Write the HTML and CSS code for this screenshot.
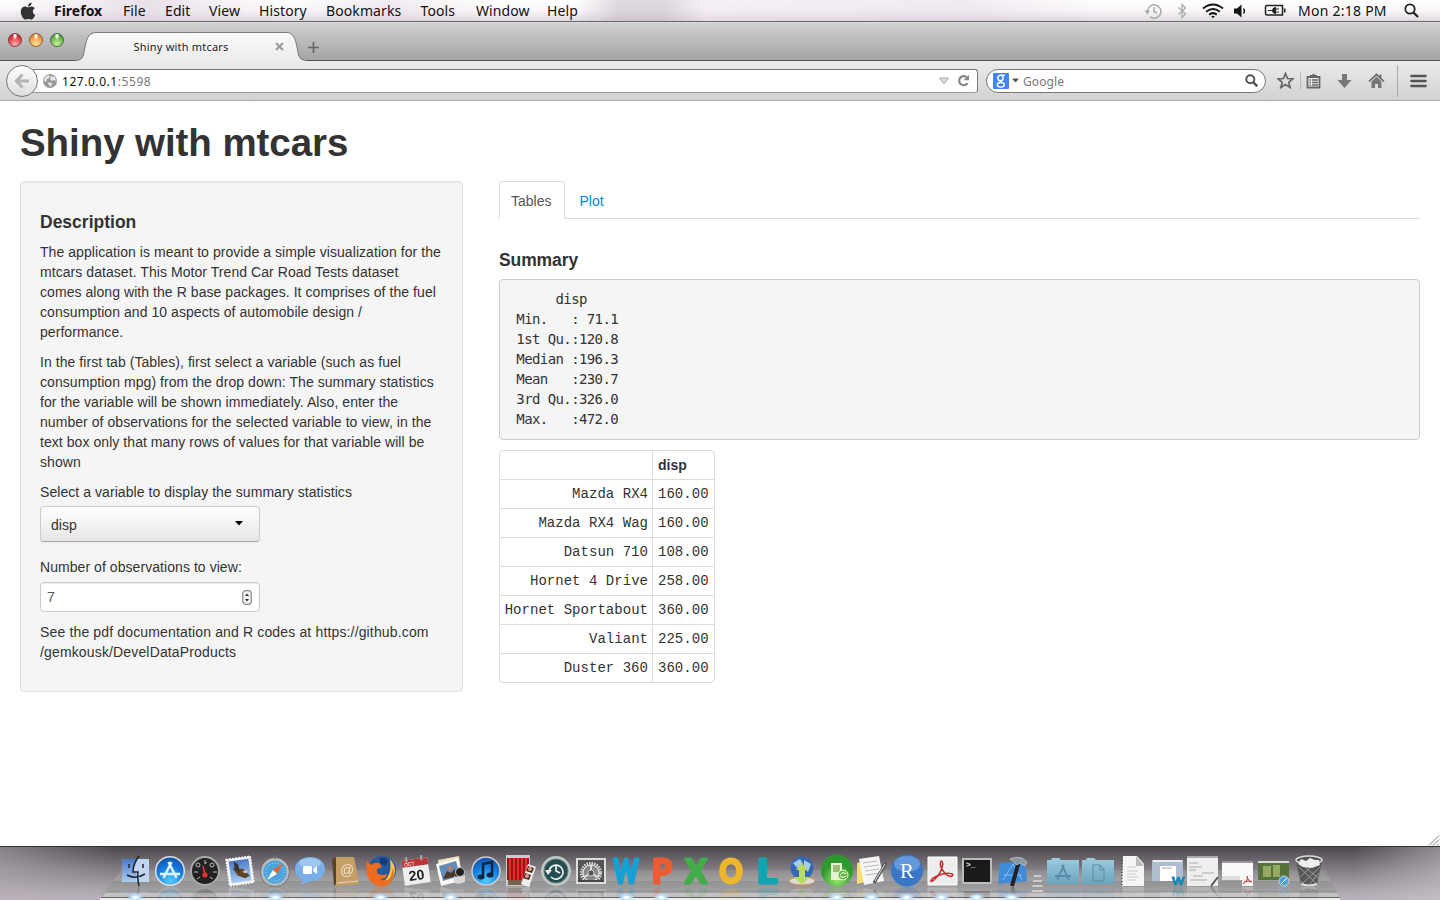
FILE: index.html
```html
<!DOCTYPE html>
<html lang="en">
<head>
<meta charset="utf-8">
<title>Shiny with mtcars</title>
<link rel="stylesheet" href="styles.css">
</head>
<body>
<header class="menubar">
  <svg class="apple" viewBox="0 20 384 470" width="16" height="18"><path fill="#333" d="M318.7 268.7c-.2-36.7 16.4-64.4 50-84.8-18.8-26.9-47.2-41.7-84.7-44.6-35.5-2.8-74.3 20.7-88.5 20.7-15 0-49.4-19.7-76.4-19.7C63.3 141.2 4 184.8 4 273.5q0 39.3 14.4 81.2c12.8 36.7 59 126.7 107.2 125.2 25.2-.6 43-17.9 75.8-17.9 31.8 0 48.3 17.9 76.4 17.9 48.6-.7 90.4-82.5 102.6-119.3-65.2-30.7-61.7-90-61.7-91.9zm-56.6-164.2c27.3-32.4 24.8-61.9 24-72.5-24.1 1.4-52 16.4-67.9 34.9-17.5 19.8-27.8 44.3-25.6 71.9 26.1 2 49.9-11.4 69.5-34.3z"/></svg>
  <nav class="menus"><b>Firefox</b><span>File</span><span>Edit</span><span>View</span><span>History</span><span>Bookmarks</span><span>Tools</span><span>Window</span><span>Help</span></nav>
  <div class="status">
    <svg width="18" height="18" viewBox="0 0 18 18" fill="none" stroke="#aaa" stroke-width="1.5"><path d="M3.500 10A6.700 6.700 0 1 1 6 14.800M10 5v4.500l3 1.500"/><path d="M.3 8.500h6l-3 4z" fill="#aaa" stroke="none"/></svg>
    <svg width="10" height="16" viewBox="0 0 10 16" fill="none" stroke="#aaa" stroke-width="1.2"><path d="M1.500 4.500l7 6.500L5 14.500v-13L8.500 5l-7 6.500"/></svg>
    <svg width="22" height="16" viewBox="0 0 22 16" fill="none" stroke="#151515" stroke-width="2"><path d="M1 5.500Q11-2.500 21 5.500M4.200 8.700Q11 3.300 17.800 8.700M7.200 11.600Q11 8.700 14.800 11.600"/><path d="M9.200 13.300Q11 12 12.800 13.300L11 15.200z" fill="#151515" stroke="none"/></svg>
    <svg width="14" height="14" viewBox="0 0 14 14"><path fill="#151515" d="M1 4.500h3l4.500-4v13l-4.500-4H1z"/><path d="M10.500 4.500q2 2.500 0 5" fill="none" stroke="#151515" stroke-width="1.300"/></svg>
    <svg width="22" height="13" viewBox="0 0 22 13" fill="none" stroke="#222" stroke-width="1.500"><path d="M17 1.500h1.500v9.500H17M5 1.500h12M5 11h12M5 1.500H3Q1.500 1.500 1.500 3v6.500Q1.500 11 3 11h2"/><path d="M20.700 4.500v4" stroke-width="1.600"/><path fill="#222" stroke="none" d="M4 6h4q1-3 4-3v1.500h3v1h-3v2h3v1h-3V10q-3 0-4-3H4z"/></svg>
    <span class="clock">Mon 2:18 PM</span>
    <svg width="15" height="15" viewBox="0 0 15 15" fill="none" stroke="#222"><circle cx="6" cy="6" r="4.700" stroke-width="1.800"/><path d="M9.500 9.500l4.500 4.500" stroke-width="2.300"/></svg>
  </div>
</header>
<section class="browser">
  <div class="tabbar">
    <div class="lights"><i class="red"></i><i class="amber"></i><i class="green"></i></div>
    <div class="tab">
      <svg class="tab-shape" width="232" height="29" viewBox="0 0 232 29"><defs><linearGradient id="tabg" x2="0" y2="1"><stop stop-color="#fbfbfb"/><stop offset="1" stop-color="#ebebeb"/></linearGradient></defs><path d="M0 28.500C9 28 8 24 10 15C12 5 14 .500 22 .500H211C218 .500 220 5 222 15C224 24 223 28 232 28.500V29H0z" fill="url(#tabg)"/><path d="M0 28.500C9 28 8 24 10 15C12 5 14 .500 22 .500H211C218 .500 220 5 222 15C224 24 223 28 232 28.500" fill="none" stroke="#777"/></svg>
      <span class="tab-title">Shiny with mtcars</span>
      <svg class="tab-close" width="9" height="9" viewBox="0 0 9 9"><path d="M1 1l7 7M8 1l-7 7" stroke="#999" stroke-width="2"/></svg>
    </div>
    <svg class="plus" width="11" height="11" viewBox="0 0 11 11"><path d="M5.500 0v11M0 5.500h11" stroke="#666" stroke-width="1.600"/></svg>
  </div>
  <div class="toolbar">
    <div class="back"><svg width="16" height="16" viewBox="0 0 16 16"><path d="M8.500 1.500L2.500 8l6 6.500M3 8h12" fill="none" stroke="#b4b4b4" stroke-width="3.200"/></svg></div>
    <div class="address">
      <svg width="14" height="14" viewBox="0 0 14 14"><circle cx="7" cy="7" r="7" fill="#999"/><path d="M2 3l3-2 2 1-1 2-2 1-1 3-2-1zM8 2l4 1 1 4-2-1-2 1-2-2zM6 8l3 1-1 4-3-3z" fill="#e6e6e6"/></svg>
      <span class="url">127.0.0.1<em>:5598</em></span>
      <svg class="drop" width="10" height="8" viewBox="0 0 10 8"><path d="M.5 1h9L5 7z" fill="#ddd" stroke="#aaa"/></svg>
      <svg width="13" height="13" viewBox="0 0 13 13"><path d="M9.500 3.200A4.500 4.500 0 1 0 10.500 9" fill="none" stroke="#888" stroke-width="2.200"/><path d="M12 .800v5.500H6.500z" fill="#888"/></svg>
    </div>
    <div class="search">
      <svg width="16" height="16" viewBox="0 0 16 16"><rect width="16" height="16" rx="1" fill="#4285f4"/><g fill="none" stroke="#fff" stroke-width="1.400"><ellipse cx="7.500" cy="5" rx="2.600" ry="2.800"/><path d="M8 2.200h4M8.500 7.500Q6.500 8.500 8.300 9.300"/><ellipse cx="7.800" cy="11.800" rx="3.500" ry="2.300"/></g></svg>
      <svg width="7" height="5" viewBox="0 0 7 5"><path d="M0 .500h7L3.500 4.500z" fill="#555"/></svg>
      <span>Google</span>
      <svg class="magnifier" width="13" height="13" viewBox="0 0 13 13" fill="none" stroke="#555" stroke-width="2"><circle cx="5.300" cy="5.300" r="4"/><path d="M8.300 8.300l4 4" stroke-width="2.600"/></svg>
    </div>
    <div class="tools">
      <svg width="17" height="17" viewBox="0 0 17 17"><path d="M8.500 1.500l2 5 5.300.3-4 3.500 1.300 5.200-4.600-2.900-4.600 2.900 1.300-5.200-4-3.500 5.300-.3z" fill="none" stroke="#666" stroke-width="1.700"/></svg>
      <i class="rule"></i>
      <svg width="15" height="16" viewBox="0 0 15 16"><path d="M1.500 4h12v10.500h-12z" fill="#eee" stroke="#666" stroke-width="1.800"/><path d="M4 4V2h2L7.500.500 9 2h2v2z" fill="#666"/><path d="M3.500 7h1.500M6 7h6M3.500 9.500H5M6 9.500h6M3.500 12H5M6 12h6" stroke="#666" stroke-width="1.300"/></svg>
      <svg width="15" height="16" viewBox="0 0 15 16"><path d="M5 1h5v6h4.500l-7 8-7-8H5z" fill="#777"/></svg>
      <svg width="17" height="16" viewBox="0 0 17 16"><path d="M1 8.500l7.500-7 7.500 7M12.500 1.500v4" fill="none" stroke="#666" stroke-width="1.700"/><path d="M3.500 8.500l5-5 5 5V15H10v-4H7v4H3.500z" fill="#777"/></svg>
      <i class="rule tall"></i>
      <svg width="17" height="14" viewBox="0 0 17 14"><path d="M1.500 2h14M1.500 7h14M1.500 12h14" stroke="#555" stroke-width="2.600" stroke-linecap="round"/></svg>
    </div>
  </div>
</section>
<main class="page">
  <h1>Shiny with mtcars</h1>
  <div class="columns">
    <aside class="well">
      <h4>Description</h4>
      <p>The application is meant to provide a simple visualization for the<br>mtcars dataset. This Motor Trend Car Road Tests dataset<br>comes along with the R base packages. It comprises of the fuel<br>consumption and 10 aspects of automobile design /<br>performance.</p>
      <p>In the first tab (Tables), first select a variable (such as fuel<br>consumption mpg) from the drop down: The summary statistics<br>for the variable will be shown immediately. Also, enter the<br>number of observations for the selected variable to view, in the<br>text box only that many rows of values for that variable will be<br>shown</p>
      <div class="label">Select a variable to display the summary statistics</div>
      <div class="select"><span>disp</span><svg width="8" height="5" viewBox="0 0 8 5"><path d="M0 0h8L4 4.500z"/></svg></div>
      <div class="label">Number of observations to view:</div>
      <div class="number"><span>7</span><svg width="10" height="15" viewBox="0 0 10 15"><rect x=".7" y=".7" width="8.600" height="13.600" rx="3" fill="#f3f3f3" stroke="#888" stroke-width="1.200"/><path d="M3 6l2-2.500L7 6zM3 9l2 2.500L7 9z" fill="#333"/></svg></div>
      <p class="note">See the pdf documentation and R codes at https://github.com<br>/gemkousk/DevelDataProducts</p>
    </aside>
    <section class="content">
      <nav class="tabs"><span class="active">Tables</span><span>Plot</span></nav>
      <h4>Summary</h4>
      <pre>      disp      
 Min.   : 71.1  
 1st Qu.:120.8  
 Median :196.3  
 Mean   :230.7  
 3rd Qu.:326.0  
 Max.   :472.0  </pre>
      <table>
        <tr><th></th><th>disp</th></tr>
        <tr><td>Mazda RX4</td><td>160.00</td></tr>
        <tr><td>Mazda RX4 Wag</td><td>160.00</td></tr>
        <tr><td>Datsun 710</td><td>108.00</td></tr>
        <tr><td>Hornet 4 Drive</td><td>258.00</td></tr>
        <tr><td>Hornet Sportabout</td><td>360.00</td></tr>
        <tr><td>Valiant</td><td>225.00</td></tr>
        <tr><td>Duster 360</td><td>360.00</td></tr>
      </table>
    </section>
  </div>
  <svg class="grip" width="12" height="11" viewBox="0 0 12 11"><path d="M1 10.500L11 .500M5 10.500l6-6M9 10.500l2-2" stroke="#777"/></svg>
</main>
<footer class="desktop">
  <svg class="shelf" width="1240" height="30" viewBox="0 0 1240 30"><defs>
    <linearGradient id="shelfg" x2="0" y2="1"><stop stop-color="#8d8b8e"/><stop offset=".4" stop-color="#a2a1a3"/><stop offset=".42" stop-color="#929193"/><stop offset="1" stop-color="#a9a8aa"/></linearGradient>
    <radialGradient id="blue" cy=".85" r=".75"><stop stop-color="#4fd0ff"/><stop offset=".6" stop-color="#1684e6"/><stop offset="1" stop-color="#1559b4"/></radialGradient>
    <radialGradient id="green" cy=".8"><stop stop-color="#9be66e"/><stop offset="1" stop-color="#2d9a2d"/></radialGradient>
    <linearGradient id="sky" x2="0" y2="1"><stop stop-color="#4a78c8"/><stop offset="1" stop-color="#a9cdf2"/></linearGradient>
    <linearGradient id="folder" x2="0" y2="1"><stop stop-color="#9ccbdd"/><stop offset="1" stop-color="#6ba4bf"/></linearGradient>
  </defs><path d="M22 0H1225L1240 27H1V25z" fill="url(#shelfg)"/><path d="M7 22H1237L1240 27H1z" fill="#c2c1c3"/><path d="M7 22H1237" stroke="#858487"/><path d="M1 27.500H1240" stroke="#666"/><path d="M0 29H1240" stroke="#eee" stroke-width="2"/></svg>
  <div class="dock">
    <div class="app on"><svg viewBox="0 0 32 32"><path d="M3 4h27v23H3z" fill="url(#sky)"/><path d="M18 4h12v23H16q2-4 1-10h-3Q14 10 18 4" fill="#c0d6ee"/><path d="M20 1q-6 8-6 16h5q-1 6 1 14M10 9v4M24 9v4M8 20q8 5 18-1" fill="none" stroke="#1b2435" stroke-width="1.500"/></svg></div>
    <div class="app"><svg viewBox="0 0 32 32"><circle cx="16" cy="16" r="14.300" fill="url(#blue)" stroke="#ddd" stroke-width="1.500"/><path d="M14.500 7L22.500 23M17.500 7L9.500 23M6 19h20" stroke="#e4f2ff" stroke-width="2.500"/></svg></div>
    <div class="app"><svg viewBox="0 0 32 32"><circle cx="16" cy="16" r="14" fill="#222" stroke="#aaa" stroke-width="2"/><path d="M16 20l-2-9" stroke="#f33" stroke-width="1.500"/><circle cx="16" cy="20" r="2.500" fill="#e33"/><g fill="none" stroke="#bbb"><circle cx="9" cy="10" r="2"/><circle cx="23" cy="10" r="2"/><path d="M5 17h4M24 17h4M8 24l3-2M24 24l-3-2M16 5v4l2-2"/></g></svg></div>
    <div class="app"><svg viewBox="0 0 32 32"><g transform="rotate(-8 16 16)"><path d="M4 3h24v26H4z" fill="#f5f5f5" stroke="#fff" stroke-width="2" stroke-dasharray="2 1"/><path d="M6 5h20v22H6z" fill="url(#sky)"/><path d="M9 12l5 2 5 0 6 8-5 2-7-4z" fill="#62452c"/><path d="M11 6l4 3 1 9-5-4z" fill="#39352c"/><path d="M18 17l4-1 2 2-3 1z" fill="#ddc9a0"/></g></svg></div>
    <div class="app on"><svg viewBox="0 0 32 32"><circle cx="16" cy="17" r="13" fill="#4aa5dc" stroke="#bbb" stroke-width="3"/><circle cx="16" cy="17" r="14.500" fill="none" stroke="#666" stroke-width=".8"/><circle cx="16" cy="17" r="9" fill="none" stroke="#cdf" stroke-dasharray="1 2"/><path d="M24 8l-6 11-4-4z" fill="#f16232"/><path d="M8 25l6-10 4 4z" fill="#fff"/><circle cx="16" cy="2" r="1.300" fill="none" stroke="#777"/></svg></div>
    <div class="app"><svg viewBox="0 0 32 32"><path d="M16 2c9 0 15 5 15 12S25 26 17 26L6 30l3-5C4 22 1 20 1 14S7 2 16 2" fill="#79aee8"/><ellipse cx="16" cy="8" rx="11" ry="5" fill="#aed1f5" opacity=".7"/><rect x="9" y="11" width="9" height="8" rx="1.500" fill="#fff"/><path d="M19 14l4-3v8l-4-3z" fill="#fff"/></svg></div>
    <div class="app"><svg viewBox="0 0 32 32"><path d="M2 4l4-2 2 25-4 4z" fill="#594329"/><path d="M6 2h18l5 24-1 3-22 2z" fill="#c59e65"/><path d="M7 28l21-2" stroke="#e9d8bb"/><text x="17" y="20" text-anchor="middle" font-family="Liberation Sans,sans-serif" font-size="14" fill="#f0dfc4">@</text></svg></div>
    <div class="app on"><svg viewBox="0 0 32 32"><circle cx="17" cy="15" r="14" fill="#235a9b"/><path d="M25 4q8 9 3 19-6 8-14 6 14-6 11-25z" fill="#ffc63e"/><path d="M2 6l4 4q4-3 8-2l3 4-5 2q-1 5 4 6 4 0 6-1 0 5-7 5 8 4 11-3l2-8q2 8-2 14-9 9-20 0Q-1 18 2 6z" fill="#ee6b20"/><path d="M15 3q5-2 8 3l-3 5-5-3z" fill="#173b72"/></svg></div>
    <div class="app"><svg viewBox="0 0 32 32"><g transform="rotate(-8 16 16)"><path d="M3 4h26v25H3z" fill="#eee"/><path d="M3 4h26v7H3z" fill="#bd3438"/><text x="16" y="25" text-anchor="middle" font-family="Liberation Sans,sans-serif" font-weight="bold" font-size="14" fill="#222">20</text><text x="5" y="10" font-family="Liberation Sans,sans-serif" font-size="5" fill="#fff">OCT</text><path d="M8 1v5M23 1v5" stroke="#aaa" stroke-width="2"/></g></svg></div>
    <div class="app on"><svg viewBox="0 0 32 32"><path d="M3 5l21-4 3 22-22 3z" fill="#eee1c0"/><path d="M1 9l22-6 6 22-23 6z" fill="#fafafa"/><path d="M4 11l17-5 4 15-17 5z" fill="#638bb5"/><path d="M8 24l4-8 4 2 4-4 3 7z" fill="#4b3528"/><circle cx="15" cy="13" r="2" fill="#c9815d"/><circle cx="25" cy="17" r="4.500" fill="#222" stroke="#bbb"/><path d="M19 21q5 3 11-1v7q-5 3-11 1z" fill="#d6d6d6"/></svg></div>
    <div class="app"><svg viewBox="0 0 32 32"><circle cx="16" cy="16" r="14" fill="url(#blue)" stroke="#ccc" stroke-width="1.500"/><path d="M13 22V9l9-2v12" fill="none" stroke="#13233b" stroke-width="2.500"/><ellipse cx="11" cy="22" rx="3.500" ry="2.500" fill="#13233b"/><ellipse cx="20" cy="20" rx="3.500" ry="2.500" fill="#13233b"/></svg></div>
    <div class="app"><svg viewBox="0 0 32 32"><path d="M1 0h24v31H1z" fill="#ccc"/><path d="M2 3h22v22H2z" fill="#a40f15"/><path d="M5 3v22M9 3v22M13 3v22M17 3v22M21 3v22" stroke="#e42c2d" stroke-width="2"/><path d="M3 25h15v5H3z" fill="#76604d"/><path d="M23 9l8 3-7 20-8-3z" fill="#eee"/><path d="M23 11l6 2-2 5-6-2zM20 18l6 2-2 5-6-2z" fill="#4a2b20"/><circle cx="25" cy="14" r="2" fill="#d7a07b"/><circle cx="22" cy="21" r="2" fill="#d7a07b"/></svg></div>
    <div class="app"><svg viewBox="0 0 32 32"><circle cx="16" cy="16" r="15" fill="#bec8c7"/><circle cx="16" cy="16" r="12" fill="#234d50" stroke="#6a7776"/><path d="M9 17a7 7 0 1 1 2 5M16 11v5l4 2" fill="none" stroke="#e7f2f0" stroke-width="1.700"/><path d="M5 15h7l-4 5z" fill="#e7f2f0"/></svg></div>
    <div class="app"><svg viewBox="0 0 32 32"><path d="M1 3h30v26H1z" fill="#ddd"/><path d="M3 5h26v22H3z" fill="#555"/><circle cx="16" cy="18" r="9.500" fill="none" stroke="#ddd" stroke-width="3" stroke-dasharray="1.5 1"/><circle cx="16" cy="18" r="8" fill="#888" stroke="#eee"/><circle cx="16" cy="18" r="3" fill="#555" stroke="#ccc"/><path d="M16 10v5M9 22l4-2M23 22l-4-2" stroke="#ddd" stroke-width="2"/><path d="M3 25h26v2H3z" fill="#444"/></svg></div>
    <div class="app office on"><svg viewBox="0 0 32 32"><text x="16" y="28" fill="#16a0d5" stroke="#16a0d5" textLength="25" lengthAdjust="spacingAndGlyphs">W</text></svg></div>
    <div class="app office on"><svg viewBox="0 0 32 32"><text x="17" y="28" fill="#ed5b31" stroke="#ed5b31">P</text></svg></div>
    <div class="app office"><svg viewBox="0 0 32 32"><text x="16" y="28" fill="#43ae49" stroke="#43ae49">X</text></svg></div>
    <div class="app office"><svg viewBox="0 0 32 32"><text x="16" y="28" fill="#eeb62b" stroke="#eeb62b" textLength="23" lengthAdjust="spacingAndGlyphs">O</text></svg></div>
    <div class="app office"><svg viewBox="0 0 32 32"><text x="17" y="28" fill="#11a5b4" stroke="#11a5b4" textLength="20" lengthAdjust="spacingAndGlyphs">L</text></svg></div>
    <div class="app"><svg viewBox="0 0 32 32"><ellipse cx="16" cy="26" rx="13" ry="4" fill="#ddd" stroke="#d98850"/><circle cx="16" cy="13" r="11.500" fill="#3568b4"/><path d="M7 8l7-4 3 5-5 5zM18 5l7 4-3 8-4-4z" fill="#a4cce8"/><path d="M16 8l6 7h-3v7h5l-8 8-8-8h5v-7h-3z" fill="#b9da63"/></svg></div>
    <div class="app on"><svg viewBox="0 0 32 32"><circle cx="16" cy="15.500" r="16" fill="url(#green)"/><path d="M10 8h11v17H10z" fill="#e8f2cf"/><path d="M12 10h7v7h-7z" fill="#9bbd78"/><circle cx="22" cy="20" r="5" fill="#63b745" stroke="#eaffd9"/><path d="M19 20q3-4 6-1M25 21q-3 3-6 0" fill="none" stroke="#fff"/></svg></div>
    <div class="app on"><svg viewBox="0 0 32 32"><path d="M1 8l8-2 4 20-12 3z" fill="#f5df77"/><path d="M3 4l20-3 5 25-20 4z" fill="#f5f5f5"/><path d="M7 8l14-2M8 12l15-2M9 16l14-2M10 20l14-2" stroke="#bbb"/><path d="M30 8L18 28" stroke="#555" stroke-width="3"/><path d="M29 9L19 26" stroke="#ddd"/></svg></div>
    <div class="app on"><svg viewBox="0 0 32 32"><circle cx="16" cy="15.500" r="16" fill="#3976c5"/><ellipse cx="16" cy="9" rx="13" ry="8" fill="#8bbaf0" opacity=".5"/><text x="16" y="23" text-anchor="middle" font-family="Liberation Serif,serif" font-size="21" fill="#fff">R</text></svg></div>
    <div class="app on"><svg viewBox="0 0 32 32"><path d="M2 2h29v28H2z" fill="#eee" stroke="#fff"/><path d="M15 6c4 0 1 12-7 19-5 4-4-1 3-4 8-4 19-3 15 0-5 2-14-9-11-15z" fill="none" stroke="#c32b2d" stroke-width="1.500"/></svg></div>
    <div class="app on"><svg viewBox="0 0 32 32"><path d="M1 3h30v26H1z" fill="#bbb"/><path d="M3 5h26v22H3z" fill="#171a19"/><text x="5" y="12" font-family="Liberation Mono,monospace" font-size="8" font-weight="bold" fill="#eee">&gt;_</text></svg></div>
    <div class="app on"><svg viewBox="0 0 32 32"><path d="M4 8l25-2 2 20-29 3z" fill="#3e8bd7"/><path d="M7 25L17 9l9 16M8 20h18" fill="none" stroke="#80bdf0"/><path d="M23 6L16 31" stroke="#222" stroke-width="4"/><path d="M14 4q6-3 12-1l5 4-2 4-5-3-3 2q-3-3-7-6z" fill="#8d989f" stroke="#ccc" stroke-width=".7"/></svg></div>
    <div class="separator"></div>
    <div class="app"><svg viewBox="0 0 32 32"><path d="M0 5h4l1-2h7l2 2h18v24H0z" fill="url(#folder)"/><path d="M15 10l7 15M17 10l-7 15M8 21h16" stroke="#578da6" stroke-width="1.800"/></svg></div>
    <div class="app"><svg viewBox="0 0 32 32"><path d="M0 5h4l1-2h7l2 2h18v24H0z" fill="url(#folder)"/><path d="M11 10h7l4 4v12H11zM18 10v5h4" fill="none" stroke="#578da6"/></svg></div>
    <div class="app"><svg viewBox="0 0 32 32"><path d="M6 1h14l7 8v22H5z" fill="#f5f5f5"/><path d="M19 1l8 10h-8z" fill="#bbb"/><path d="M5 5v26" stroke="#333" stroke-dasharray="1 2"/><path d="M10 12h9M10 16h11M10 19h9M10 22h11M10 25h8" stroke="#ccc"/></svg></div>
    <div class="app"><svg viewBox="0 0 32 32"><path d="M0 5h31v21H0z" fill="#aebdd0"/><path d="M1 6h29" stroke="#eee" stroke-width="2"/><path d="M8 11h16v15H8z" fill="#fff"/><path d="M10 13h10" stroke="#aaa"/><text x="20" y="30" font-family="Lato,sans-serif" font-weight="bold" font-size="12" fill="#1689b7" stroke="#1689b7" stroke-width="1">W</text></svg></div>
    <div class="app"><svg viewBox="0 0 32 32"><path d="M0 1h31v30H0z" fill="#eee"/><path d="M0 2h31" stroke="#aaa" stroke-width="2"/><path d="M2 8h9M2 12h13M2 15h7M15 18h12M6 21h10M3 25h17" stroke="#aaa"/><path d="M31 22l-7 9" stroke="#555" stroke-width="2"/></svg></div>
    <div class="app"><svg viewBox="0 0 32 32"><path d="M0 7h31v18H0z" fill="#f9f9f9"/><path d="M0 7h31" stroke="#999" stroke-width="2"/><path d="M0 21h18v4H0z" fill="#ddd"/><path d="M20 19h11v12H20z" fill="#f5f5f5"/><path d="M25 21q2 4-4 8M22 27q5-2 8 0M25 22q1 4 5 5" fill="none" stroke="#c33"/></svg></div>
    <div class="app"><svg viewBox="0 0 32 32"><path d="M0 6h31v19H0z" fill="#557239"/><path d="M0 7h31" stroke="#ddd" stroke-width="2"/><path d="M5 11h8v11H5zM15 10h7v12h-7z" fill="#95aa61"/><circle cx="26" cy="26" r="5" fill="#4aa5dc" stroke="#ccc"/><path d="M29 23l-6 6" stroke="#fff"/></svg></div>
    <div class="app"><svg viewBox="0 0 32 32"><path d="M3 5l5 25q8 3 16 0L29 5z" fill="#4d4d4d" opacity=".85"/><path d="M6 12l18 17M10 10l16 14M20 10L7 22M27 12L10 28M8 26l4 4M26 18L16 30" stroke="#aaa" stroke-width=".8"/><path d="M8 29q8 3 16 0" fill="none" stroke="#ddd" stroke-width="2"/><ellipse cx="16" cy="5" rx="13" ry="4" fill="#555" stroke="#ddd" stroke-width="1.500"/><path d="M5 9l3-5 5 2 4-3 5 2 4 0 1 5-8 3-9-1z" fill="#eee"/></svg></div>
  </div>
</footer>
</body>
</html>
```
FILE: styles.css
```css
* { box-sizing: border-box; }
body { margin: 0; width: 1440px; height: 900px; overflow: hidden; display: flex; flex-direction: column; background: #fff; color: #333; font: 14px/20px "Liberation Sans", Arial, sans-serif; }
svg { display: block; flex: none; }
h1, h4, p, pre { margin: 0; }
.menubar { height: 22px; display: flex; align-items: center; padding: 0 21px 0 20px; color: #111; font: 14px/20px "Noto Sans", sans-serif; border-bottom: 1px solid #666; background: linear-gradient(90deg, #f0e5f000, #dccfdc99 10%, #fff0 20%, #ddcfdc66 27%, #fff0 34%, #fff0 40%, #b8adb877 43%, #b8adb877 46%, #eadbe666 49%, #ddcfdc66 67%, #fff0 77%, #fff0), linear-gradient(#fff, #faf7fa 50%, #dfdae0); }
.apple { margin-right: 18px; }
.menus { display: grid; grid-template-columns: 69px 42px 44px 50px 67px 94.500px 55.500px 71px 60px; letter-spacing: .1px; white-space: nowrap; }
.menus b { letter-spacing: 0; }
.status { margin-left: auto; display: flex; align-items: center; }
.status svg:nth-child(1) { margin-right: 15px; }
.status svg:nth-child(2) { margin-right: 15px; }
.status svg:nth-child(3) { margin-right: 9px; }
.status svg:nth-child(4) { margin-right: 17px; }
.status svg:nth-child(5) { margin-right: 13px; }
.status svg:nth-child(-n+5) { position: relative; left: 1px; }
.clock { width: 89px; margin-right: 17px; white-space: nowrap; letter-spacing: .25px; }
.tabbar { height: 39px; display: flex; align-items: flex-end; background: linear-gradient(#d0d0d0, #a4a4a4); border-bottom: 1px solid #555; border-top: 1px solid #ddd; }
.lights { display: flex; gap: 7px; padding: 0 0 13px 8px; width: 75px; }
.lights i { width: 14px; height: 14px; border-radius: 50%; border: 1px solid #744; }
.red { background: radial-gradient(ellipse at 50% 15%, #fff 0 8%, transparent 30%), radial-gradient(circle at 50% 85%, #ffb2b2, #e2383f 60%, #a42029); }
.lights .amber { border-color: #8e5b32; background: radial-gradient(ellipse at 50% 15%, #fff 0 8%, transparent 30%), radial-gradient(circle at 50% 85%, #ffe69a, #ed9c43 60%, #ba6424); }
.lights .green { border-color: #486e38; background: radial-gradient(ellipse at 50% 15%, #fff 0 8%, transparent 30%), radial-gradient(circle at 50% 85%, #d0f5a1, #66b44b 60%, #39752c); }
.tab { position: relative; width: 232px; height: 29px; margin-bottom: -1px; display: flex; align-items: center; padding: 0 23px 0 58.500px; color: #222; font: 11px/16px "Noto Sans", sans-serif; letter-spacing: .2px; }
.tab-shape { position: absolute; left: 0; top: 0; }
.tab-title, .tab-close { position: relative; }
.tab-close { margin-left: auto; }
.plus { margin: 0 0 7px .5px; }
.toolbar { height: 40px; display: flex; align-items: center; padding: 0 13px 0 6px; border-bottom: 1px solid #aaa; background: linear-gradient(#ebebeb, #d2d2d2); font: 12px/18px "Noto Sans", sans-serif; }
.back { position: relative; z-index: 1; width: 32px; height: 32px; border: 1px solid #777; border-radius: 50%; display: flex; align-items: center; justify-content: center; background: linear-gradient(#fff, #dedede); }
.address { width: 947px; height: 24px; margin-left: -7px; padding: 0 7px 0 11px; display: flex; align-items: center; border: 1px solid #777; border-bottom-color: #999; border-radius: 3px; background: #fff; }
.url { margin: 2px 0 0 5px; color: #111; letter-spacing: .6px; }
.url em { font-style: normal; color: #777; }
.url { letter-spacing: .55px; font-size: 12px; }
.drop { margin: 0 8px 0 auto; }
.search { width: 280px; height: 24px; margin-left: 8px; display: flex; align-items: center; gap: 3px; padding: 0 7px 0 6px; border: 1px solid #777; border-radius: 12px; background: #fff; color: #777; }
.search span { margin: 2px 0 0 1px; letter-spacing: .1px; }
.magnifier { margin-left: auto; }
.tools { flex: 1; display: flex; align-items: center; padding-left: 10.500px; }
.tools svg:nth-of-type(2) { margin: 0 16px 0 5px; }
.tools svg:nth-of-type(3) { margin-right: 16px; }
.tools svg:nth-of-type(5) { margin-left: auto; }
.rule { width: 1px; height: 18px; margin-left: 6px; background: #bbb; }
.rule.tall { height: 32px; margin-left: 12px; background: #aaa; }
.page { position: relative; height: 746px; padding: 22px 20px 0; background: #fff; border-bottom: 1px solid #333; }
h1 { height: 58px; font-size: 38.500px; line-height: 40px; white-space: nowrap; letter-spacing: -.07px; }
.columns { display: flex; align-items: flex-start; gap: 36px; }
.well { width: 443px; height: 511px; padding: 30px 19px 0; border: 1px solid #e1e1e1; border-radius: 4px; background: #f5f5f5; box-shadow: inset 0 1px 1px rgba(0,0,0,.05); white-space: nowrap; letter-spacing: .06px; }
h4 { font-size: 17.500px; line-height: 20px; letter-spacing: -.1px; }
.well p { margin-bottom: 10px; }
.well .note { letter-spacing: .15px; }
.well h4 { margin-bottom: 10px; letter-spacing: 0; }
.select { width: 220px; height: 36px; margin: 4px 0 15px; padding: 1px 16px 0 10px; display: flex; align-items: center; justify-content: space-between; border: 1px solid #ccc; border-bottom-color: #aaa; border-radius: 4px; background: linear-gradient(#fff, #e6e6e6); box-shadow: 0 1px 2px rgba(0,0,0,.05); }
.select svg { margin-bottom: 3px; }
.number { width: 220px; height: 30px; margin: 5px 0 10px; padding: 0 7px 0 6px; display: flex; align-items: center; justify-content: space-between; border: 1px solid #ccc; border-radius: 4px; background: #fff; color: #555; box-shadow: inset 0 1px 1px rgba(0,0,0,.075); }
.content { flex: 1; }
.tabs { height: 38px; display: flex; border-bottom: 1px solid #ddd; margin-bottom: 31px; color: #08c; letter-spacing: 0; }
.tabs span { height: 38px; padding: 10px 12px; margin-right: 2.500px; }
.tabs .active { width: 66px; color: #555; background: #fff; border: 1px solid #ddd; border-bottom-color: #fff; border-radius: 4px 4px 0 0; padding: 9px 11px; }
pre { height: 161px; margin: 9px 0 10px; padding: 9px 8.500px; border: 1px solid #ccc; border-radius: 4px; background: #f5f5f5; font: 14px/20px "DejaVu Sans Mono", monospace; letter-spacing: -.6px; }
table { width: 216px; border: 1px solid #ddd; border-radius: 4px; border-spacing: 0; table-layout: fixed; font: 14px/20px "Liberation Mono", monospace; letter-spacing: .03px; }
td, th { height: 29px; padding: 0 4px; text-align: right; white-space: nowrap; border-top: 1px solid #ddd; }
tr:first-child th { height: 28px; border-top: 0; }
td:first-child, th:first-child { width: 152px; }
td:last-child, th:last-child { border-left: 1px solid #ddd; padding: 0 5px; text-align: left; }
th { font-family: "Liberation Sans", sans-serif; }
.grip { position: absolute; right: 0; bottom: 0; }
.desktop { position: relative; height: 53px; overflow: hidden; background: linear-gradient(90deg, #b9b0ba88, transparent 8%, transparent 94%, #c9c3ca88), linear-gradient(#4c494e, #817c82 22px, #b0a8b1 45px, #bbb3bd); }
.shelf { position: absolute; left: 100px; top: 23px; }
.dock { position: relative; display: flex; padding: 7.500px 0 0 117.500px; }
.app { position: relative; width: 35.080px; height: 45px; flex: none; display: flex; justify-content: center; }
.app svg { width: 32px; height: 32px; overflow: visible; -webkit-box-reflect: below -1px linear-gradient(transparent 50%, rgba(255,255,255,.3)); }
.on::after { content: ""; position: absolute; left: 9px; bottom: -2px; width: 17px; height: 9px; background: radial-gradient(ellipse at center, #fff 15%, #bce2ff 35%, transparent 70%); }
.office text { font: bold 32px "Lato", sans-serif; text-anchor: middle; stroke-width: 3; stroke-linejoin: round; }
.separator { width: 16px; height: 24px; flex: none; margin: 17px 0 0; background: repeating-linear-gradient(transparent 0 3px, #ccc 3px 5px); clip-path: polygon(30% 0, 70% 0, 90% 100%, 10% 100%); }
```
